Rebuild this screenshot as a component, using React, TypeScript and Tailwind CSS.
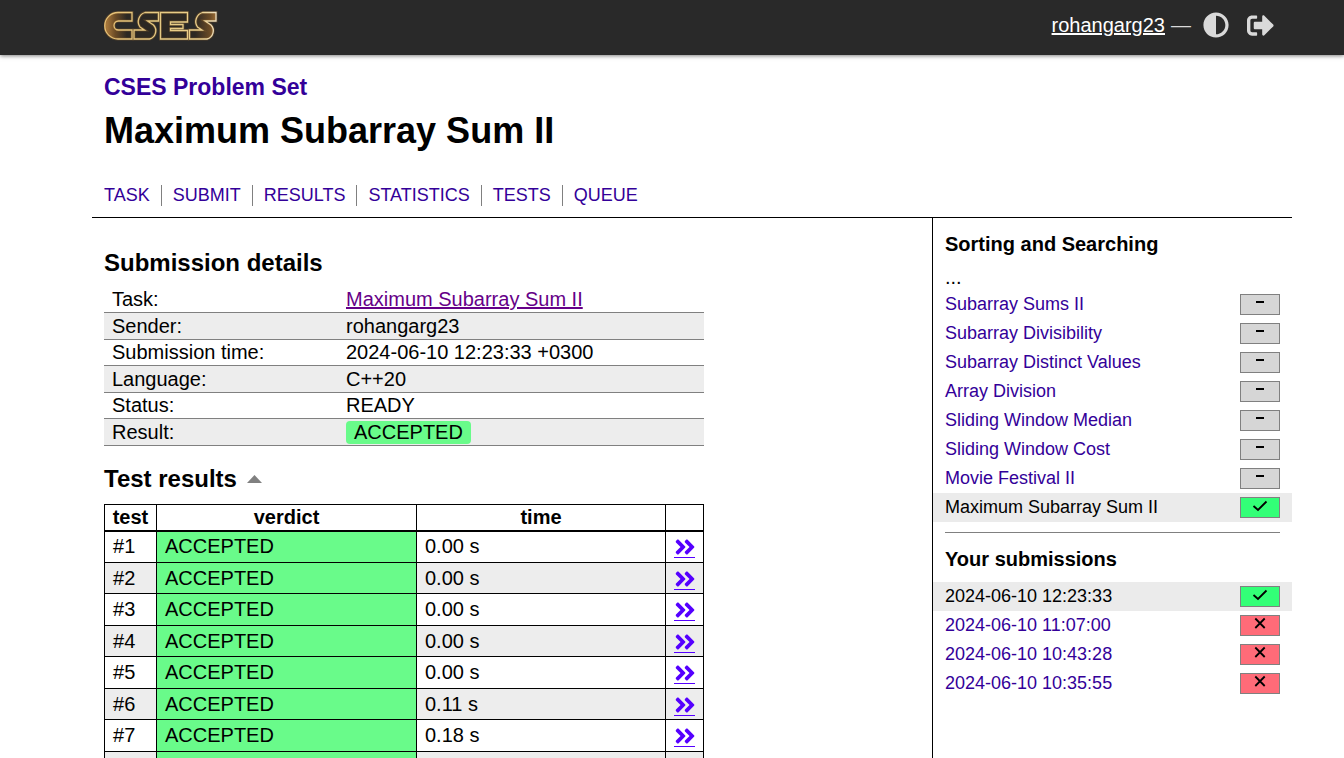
import { FaAngleDoubleRight, FaAdjust, FaSignOutAlt } from "react-icons/fa";

const nav = ["TASK", "SUBMIT", "RESULTS", "STATISTICS", "TESTS", "QUEUE"];

const tasks = [
  "Subarray Sums II",
  "Subarray Divisibility",
  "Subarray Distinct Values",
  "Array Division",
  "Sliding Window Median",
  "Sliding Window Cost",
  "Movie Festival II",
];

const failed = ["2024-06-10 11:07:00", "2024-06-10 10:43:28", "2024-06-10 10:35:55"];

const tests = [
  "0.00 s",
  "0.00 s",
  "0.00 s",
  "0.00 s",
  "0.00 s",
  "0.11 s",
  "0.18 s",
  "0.18 s",
];

const logoShapes = [
  "M28 1.500H14A13.250 13.250 0 0 0 14 28H28V19H14.500A4.500 4.500 0 0 1 14.500 10H28Z",
  "M54.500 1.500H41A9.500 9.500 0 0 0 36 16L40.500 19H30V28H45.500A8.500 8.500 0 0 0 49.500 14L43.500 10H54.500Z",
  "M56.500 1.500H83.500V11H66.500V13.500H79V17.500H66.500V19.500H83.500V28H56.500Z",
  "M112 1.500H98.500A9.500 9.500 0 0 0 93.500 16L98 19H85.500V28H103A8.500 8.500 0 0 0 107 14L101 10H112Z",
];

function Logo() {
  return (
    <svg className="block" width="114" height="30" viewBox="0 0 114 30" role="img" aria-label="CSES" fill="none">
      <defs>
        <linearGradient id="inner" gradientUnits="userSpaceOnUse" x1="0" y1="0" x2="114" y2="0">
          <stop offset="0" stopColor="#b98542" />
          <stop offset="0.1" stopColor="#6b4b26" />
          <stop offset="0.2" stopColor="#2c2823" />
          <stop offset="0.8" stopColor="#2c2823" />
          <stop offset="0.93" stopColor="#6b4b26" />
          <stop offset="1" stopColor="#a9763a" />
        </linearGradient>
        <linearGradient id="edge" gradientUnits="userSpaceOnUse" x1="0" y1="0" x2="114" y2="0">
          <stop offset="0" stopColor="#e6bf74" />
          <stop offset="0.5" stopColor="#e4ca84" />
          <stop offset="0.85" stopColor="#ecd08c" />
          <stop offset="1" stopColor="#ece0c8" />
        </linearGradient>
      </defs>
      <g strokeLinejoin="miter">
        {logoShapes.map((d) => (
          <path key={d} d={d} fill="url(#inner)" stroke="#94682f" strokeWidth="3" strokeOpacity="0.35" />
        ))}
        {logoShapes.map((d) => (
          <path key={d} d={d} stroke="url(#edge)" strokeWidth="1.300" />
        ))}
      </g>
    </svg>
  );
}

type State = "none" | "ok" | "bad";

const badgeColor: Record<State, string> = {
  none: "bg-[#d6d6d6]",
  ok: "bg-[#33ff77]",
  bad: "bg-[#ff6b78]",
};

function Badge({ state }: { state: State }) {
  return (
    <span className={`flex h-[21px] w-10 justify-center border border-[#808080] ${badgeColor[state]}`}>
      <svg width="16" height="16" viewBox="0 0 16 16" fill="none" stroke="#000" strokeWidth="2">
        {state === "none" && <path d="M4 7H12" />}
        {state === "ok" && <path d="M1.500 8L6 12L14.500 3.500" strokeWidth="1.800" />}
        {state === "bad" && <path d="M3.300 2.500L12.700 12M12.700 2.500L3.300 12" strokeWidth="1.800" />}
      </svg>
    </span>
  );
}

function SideItem({ label, state, current }: { label: string; state: State; current?: boolean }) {
  return (
    <li className={`flex h-[29px] items-center justify-between px-3 ${current ? "bg-[#ebebeb]" : ""}`}>
      <a href="#" className={`text-[18px] ${current ? "text-black" : "text-[#330099]"}`}>
        {label}
      </a>
      <Badge state={state} />
    </li>
  );
}

export default function App() {
  const details = [
    ["Task:", <a href="#" className="text-[#660088] underline">Maximum Subarray Sum II</a>],
    ["Sender:", "rohangarg23"],
    ["Submission time:", "2024-06-10 12:23:33 +0300"],
    ["Language:", "C++20"],
    ["Status:", "READY"],
    ["Result:", <span className="inline-block rounded-[4px] bg-[#69fb8a] px-2 leading-[23px]">ACCEPTED</span>],
  ];
  return (
    <div className="flex min-h-screen flex-col bg-white font-['Liberation_Sans',Arial,sans-serif] text-[20px] leading-[23px] text-black">
      <header className="bg-[#292929] pl-10 shadow-[0_1px_4px_rgba(0,0,0,0.5)]">
        <div className="mx-auto flex h-[55px] w-full max-w-[1200px] items-center justify-between pr-[18px] pl-3">
          <a href="#" className="pb-1">
            <Logo />
          </a>
          <div className="flex items-center pb-[5px] text-[#d9d9d9]">
            <a href="#" className="text-white underline">rohangarg23</a>
            <span className="ml-[6px]">—</span>
            <button type="button" aria-label="Toggle dark mode" className="ml-3">
              <FaAdjust size={26} />
            </button>
            <a href="#" aria-label="Log out" className="ml-[18px]">
              <FaSignOutAlt size={27} />
            </a>
          </div>
        </div>
      </header>

      <div className="flex grow flex-col pl-10">
        <div className="mx-auto flex w-full max-w-[1200px] grow flex-col">
          <div className="border-b border-black px-3 pt-5">
            <h3 className="text-[23px] leading-6 font-bold">
              <a href="#" className="text-[#330099]">CSES Problem Set</a>
            </h3>
            <h1 className="mt-2 text-[36px] leading-[48px] font-bold">Maximum Subarray Sum II</h1>
            <ul className="mt-[30px] mb-[11px] flex text-[18px] leading-[21px]">
              {nav.map((n, i) => (
                <li key={n} className={i ? "border-l border-[#808080] px-[11px]" : "pr-[11px]"}>
                  <a href="#" className="text-[#330099]">{n}</a>
                </li>
              ))}
            </ul>
          </div>

          <div className="flex grow">
            <main className="grow px-3 pt-[31px]">
              <h2 className="text-[24px] leading-7 font-bold">Submission details</h2>
              <table className="mt-[10px] h-[159px] w-[600px] border-collapse">
                <tbody>
                  {details.map(([k, v], i) => (
                    <tr key={i} className="border-b border-[#808080] even:bg-[#ededed]">
                      <td className="w-[234px] px-2">{k}</td>
                      <td className="px-2">{v}</td>
                    </tr>
                  ))}
                </tbody>
              </table>

              <h2 className="mt-[19px] flex items-center gap-[10px] text-[24px] leading-7 font-bold">
                Test results
                <button type="button" aria-label="Collapse test results">
                  <svg width="15" height="8" viewBox="0 0 15 8"><path d="M0 8L7.500 0L15 8Z" fill="#808080" /></svg>
                </button>
              </h2>
              <table className="mt-[11px] w-[600px] table-fixed border-collapse border border-black">
                <thead>
                  <tr className="h-[26px] border-b-2 border-black">
                    <th className="w-[52px] border-r border-black">test</th>
                    <th className="w-[260px] border-r border-black">verdict</th>
                    <th className="w-[249px] border-r border-black">time</th>
                    <th aria-label="Details" />
                  </tr>
                </thead>
                <tbody>
                  {tests.map((t, i) => (
                    <tr key={i} className="h-8 border-b border-black even:h-[31px] even:bg-[#ededed]">
                      <td className="border-r border-black px-2">#{i + 1}</td>
                      <td className="border-r border-black bg-[#69fb8a] px-2">ACCEPTED</td>
                      <td className="border-r border-black px-2">{t}</td>
                      <td className="px-2 pt-[2px]">
                        <a href="#" aria-label={`Test ${i + 1}`} className="flex h-[21px] items-center justify-center border-b border-[#5500ff] text-[#5500ff]">
                          <FaAngleDoubleRight size={24} className="shrink-0" />
                        </a>
                      </td>
                    </tr>
                  ))}
                </tbody>
              </table>
            </main>

            <aside className="w-[360px] shrink-0 border-l border-black pt-[15px]">
              <h4 className="px-3 font-bold">Sorting and Searching</h4>
              <p className="mt-[10px] mb-px px-3">...</p>
              <ul>
                {tasks.map((t) => (
                  <SideItem key={t} label={t} state="none" />
                ))}
                <SideItem label="Maximum Subarray Sum II" state="ok" current />
              </ul>
              <hr className="mx-3 mt-[10px] border-[#808080]" />
              <h4 className="mt-[15px] mb-[11px] px-3 font-bold">Your submissions</h4>
              <ul>
                <SideItem label="2024-06-10 12:23:33" state="ok" current />
                {failed.map((t) => (
                  <SideItem key={t} label={t} state="bad" />
                ))}
              </ul>
            </aside>
          </div>
        </div>
      </div>
    </div>
  );
}
